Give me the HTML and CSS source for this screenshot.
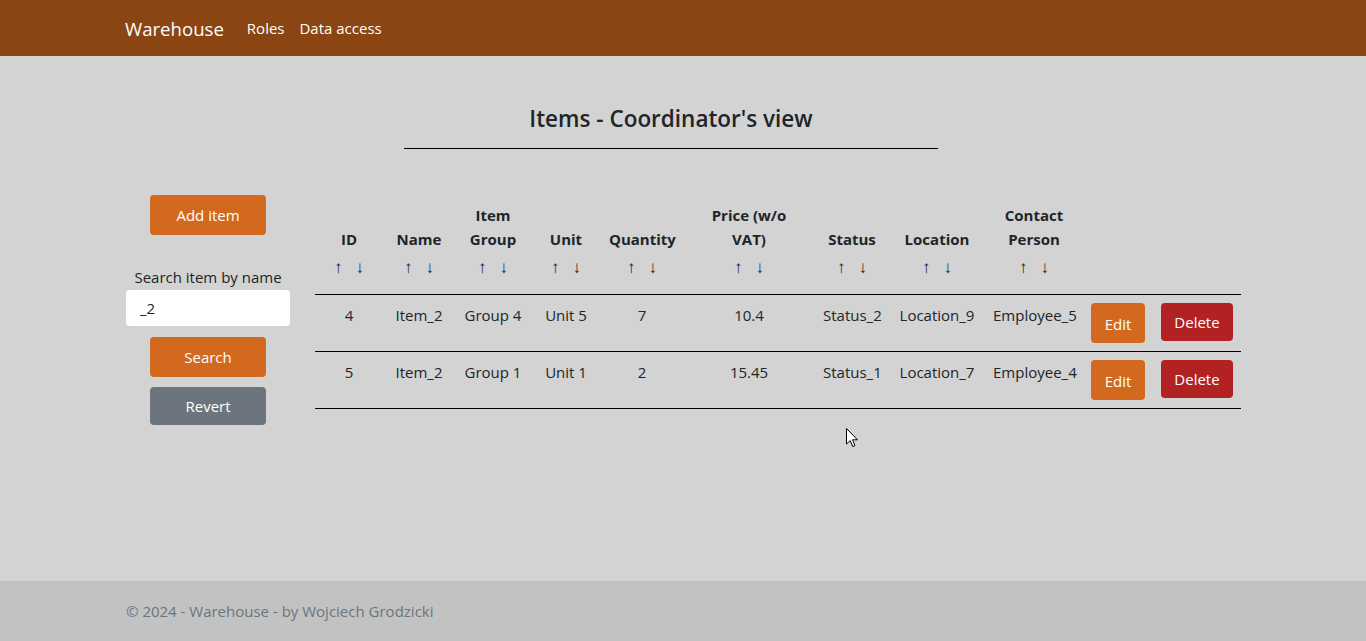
FILE: index.html
```html
<!DOCTYPE html>
<html lang="en">
<head>
<meta charset="utf-8">
<title>Items - Warehouse</title>
<link rel="stylesheet" href="styles.css">
</head>
<body>
<header class="navbar">
  <div class="container nav-inner">
    <a class="brand" href="#">Warehouse</a>
    <nav class="nav-links">
      <a href="#">Roles</a>
      <a href="#">Data access</a>
    </nav>
  </div>
</header>

<main class="main">
  <div class="container">
    <div class="page-title">
      <h2>Items - Coordinator's view</h2>
      <hr>
    </div>
    <div class="row">
      <aside class="sidebar">
        <button class="btn btn-orange btn-wide btn-tall">Add item</button>
        <label class="search-label" for="q">Search item by name</label>
        <input id="q" class="search-input" type="text" value="_2">
        <button class="btn btn-orange btn-wide btn-tall search-btn">Search</button>
        <button class="btn btn-gray btn-wide revert-btn">Revert</button>
      </aside>
      <section class="table-col">
        <table class="items">
          <colgroup>
            <col class="c-id"><col class="c-name"><col class="c-group"><col class="c-unit"><col class="c-qty"><col class="c-price"><col class="c-status"><col class="c-loc"><col class="c-contact"><col class="c-edit"><col class="c-del">
          </colgroup>
          <thead>
            <tr>
              <th><div class="th-title">ID</div><div class="sort"><span>↑</span><span>↓</span></div></th>
              <th><div class="th-title">Name</div><div class="sort"><span>↑</span><span>↓</span></div></th>
              <th><div class="th-title">Item Group</div><div class="sort"><span>↑</span><span>↓</span></div></th>
              <th><div class="th-title">Unit</div><div class="sort"><span>↑</span><span>↓</span></div></th>
              <th><div class="th-title">Quantity</div><div class="sort"><span>↑</span><span>↓</span></div></th>
              <th><div class="th-title th-narrow">Price (w/o VAT)</div><div class="sort"><span>↑</span><span>↓</span></div></th>
              <th><div class="th-title">Status</div><div class="sort"><span>↑</span><span>↓</span></div></th>
              <th><div class="th-title">Location</div><div class="sort"><span>↑</span><span>↓</span></div></th>
              <th><div class="th-title">Contact Person</div><div class="sort"><span>↑</span><span>↓</span></div></th>
              <th></th>
              <th></th>
            </tr>
          </thead>
          <tbody>
            <tr>
              <td>4</td><td>Item_2</td><td>Group 4</td><td>Unit 5</td><td>7</td><td>10.4</td><td>Status_2</td><td>Location_9</td><td>Employee_5</td>
              <td class="act"><button class="btn btn-orange btn-tall btn-edit">Edit</button></td>
              <td class="act"><button class="btn btn-red btn-del">Delete</button></td>
            </tr>
            <tr>
              <td>5</td><td>Item_2</td><td>Group 1</td><td>Unit 1</td><td>2</td><td>15.45</td><td>Status_1</td><td>Location_7</td><td>Employee_4</td>
              <td class="act"><button class="btn btn-orange btn-tall btn-edit">Edit</button></td>
              <td class="act"><button class="btn btn-red btn-del">Delete</button></td>
            </tr>
          </tbody>
        </table>
      </section>
    </div>
  </div>
</main>

<footer class="footer">
  <div class="container">© 2024 - Warehouse - by Wojciech Grodzicki</div>
</footer>

<svg class="cursor" width="13" height="20" viewBox="0 0 13 20" aria-hidden="true">
  <path d="M0.5 0.5 L0.5 16 L4.2 12.6 L6.8 18.6 L9 17.6 L6.5 11.8 L11.5 11.8 Z" fill="#fff" stroke="#000" stroke-width="1" stroke-linejoin="miter"/>
</svg>
</body>
</html>
```

FILE: styles.css
```css
* { box-sizing: border-box; }

html, body { height: 100%; }

body {
  margin: 0;
  min-height: 100vh;
  display: flex;
  flex-direction: column;
  background: #d3d3d3;
  color: #212529;
  font-family: "Open Sans", "Noto Sans", "Liberation Sans", sans-serif;
  font-size: 15px;
  line-height: 24px;
}

.container {
  width: 1140px;
  margin: 0 auto;
  padding: 0 12px;
}

/* navbar */
.navbar {
  height: 56px;
  background: #8b4513;
  flex: 0 0 auto;
}
.nav-inner {
  height: 56px;
  display: flex;
  align-items: center;
}
.brand {
  color: #fff;
  text-decoration: none;
  font-size: 18.6px;
  margin-right: 23px;
  margin-top: 1px;
}
.nav-links { display: flex; gap: 15px; }
.nav-links a {
  color: #fff;
  text-decoration: none;
  font-size: 15px;
}

/* main */
.main { flex: 1 0 auto; }

.page-title {
  width: 534px;
  margin: 48px 0 0 279px;
  text-align: center;
}
.page-title h2 {
  margin: 0;
  font-size: 22.5px;
  font-weight: 600;
  line-height: 29px;
}
.page-title hr {
  margin: 15px 0 0;
  border: 0;
  border-top: 1px solid #000;
  opacity: 1;
}

.row {
  display: flex;
  margin: 46px -12px 0;
}

.sidebar {
  width: 190px;
  padding: 0 12px;
  display: flex;
  flex-direction: column;
  align-items: center;
}

.btn {
  border: 0;
  border-radius: 4px;
  color: #fff;
  font-family: inherit;
  font-size: 15px;
  line-height: 24px;
  padding: 7px 12px;
  height: 38px;
  cursor: pointer;
}
.btn-tall { height: 40px; }
.btn-wide { width: 116px; }
.btn-orange { background: #d2691e; }
.btn-gray { background: #6c757d; }
.btn-red { background: #b22222; }

.search-label {
  margin-top: 30px;
  font-size: 15px;
  line-height: 24px;
  text-align: center;
}
.search-input {
  margin-top: 1px;
  width: 164px;
  height: 36px;
  border: 0;
  border-radius: 4px;
  background: #fff;
  padding: 0 14px;
  font-family: inherit;
  font-size: 15px;
  color: #212529;
  outline: none;
}
.search-btn { margin-top: 11px; }
.revert-btn { margin-top: 10px; }

.table-col {
  width: 950px;
  padding: 0 12px;
}

.items {
  width: 926px;
  border-collapse: collapse;
  table-layout: fixed;
}
.c-id { width: 68px; }
.c-name { width: 72px; }
.c-group { width: 76px; }
.c-unit { width: 70px; }
.c-qty { width: 82px; }
.c-price { width: 132px; }
.c-status { width: 74px; }
.c-loc { width: 96px; }
.c-contact { width: 98px; }
.c-edit { width: 70px; }
.c-del { width: 88px; }

.items th {
  padding: 8px;
  vertical-align: bottom;
  text-align: center;
  font-weight: 700;
  border-bottom: 1px solid #000;
}
.th-title { line-height: 24px; }
.th-narrow { padding: 0 12px; }
.sort {
  display: flex;
  justify-content: center;
  gap: 13px;
  margin-top: 5px;
  padding-bottom: 6px;
  font-family: "Liberation Sans", sans-serif;
  font-weight: 400;
  font-size: 17px;
  line-height: 24px;
}

.items td {
  padding: 8px;
  vertical-align: top;
  text-align: center;
  border-bottom: 1px solid #000;
  white-space: nowrap;
}
.items td.act { text-align: left; }
.btn-edit { width: 54px; padding: 9px 0 7px; }
.btn-del { width: 72px; padding: 7px 0; }

/* footer */
.footer {
  flex: 0 0 auto;
  height: 60px;
  background: #c2c2c2;
  color: #6c757d;
  display: flex;
  align-items: center;
  font-size: 15px;
}
.footer .container { padding-left: 13px; }

.cursor {
  position: absolute;
  left: 846px;
  top: 428px;
}
```
